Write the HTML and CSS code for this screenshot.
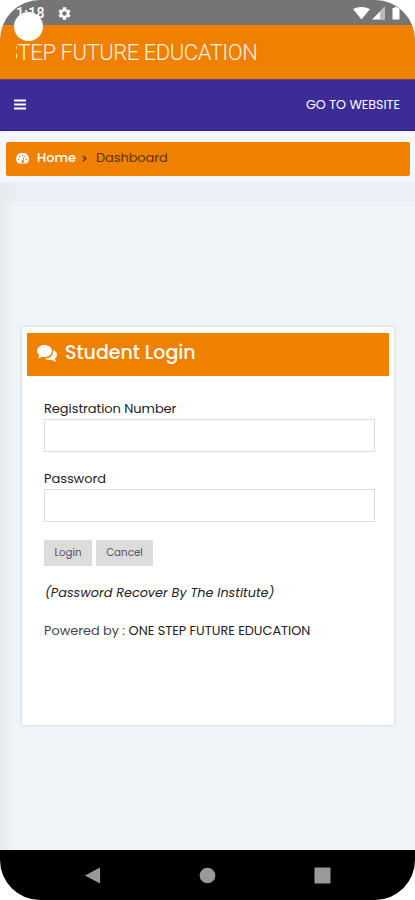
FILE: index.html
```html
<!DOCTYPE html>
<html lang="en">
<head>
<meta charset="utf-8">
<title>Student Login</title>
<link rel="stylesheet" href="styles.css">
</head>
<body>
<div class="phone">
  <div class="camera"></div>
  <div class="status">
    <span class="time">1:18</span>
    <svg class="gear" viewBox="0 0 24 24"><path fill="#fff" fill-rule="evenodd" d="M19.4 13a7.500 7.500 0 0 0 0-2l2.200-1.700-2.200-3.800-2.700 1a8 8 0 0 0-1.700-1L14.600 2H9.400L9 5.500a8 8 0 0 0-1.700 1l-2.700-1-2.200 3.800L4.600 11a7.500 7.500 0 0 0 0 2l-2.200 1.700 2.200 3.800 2.700-1a8 8 0 0 0 1.700 1l.4 3.500h5.200l.4-3.500a8 8 0 0 0 1.700-1l2.700 1 2.200-3.800zM12 8.500a3.500 3.500 0 1 1 0 7 3.500 3.500 0 0 1 0-7z"/></svg>
    <svg class="signals" viewBox="0 0 50 16"><path fill="#fff" d="M1 3Q9.500-1 18 3L9.500 13.500zM20 13.500L32 1.500V13.500z"/><path fill="#bbb" d="M28 5.500L33 .5V13.500H28z"/><path fill="#fff" d="M40.500 2h2V1h3v1h2v11.500h-7z"/></svg>
  </div>
  <header class="brand"><div class="brand-clip"><span class="brand-name">STEP FUTURE EDUCATION</span></div></header>
  <nav class="nav">
    <svg class="menu" viewBox="0 0 12 11"><path stroke="#fff" stroke-width="2" d="M0 1.500h12M0 5.500h12M0 9.500h12"/></svg>
    <a class="site">GO TO WEBSITE</a>
  </nav>
  <main class="page">
    <div class="crumbs">
      <svg class="dash" viewBox="0 0 14 12"><path fill="#fff" d="M1.600 11A7 7 0 1 1 12.400 11Q12 11.500 11.500 11.500h-9Q2 11.500 1.600 11z"/><g fill="#f08000"><circle cx="2.700" cy="7" r=".8"/><circle cx="4" cy="3.800" r=".8"/><circle cx="7" cy="2.500" r=".8"/><circle cx="10" cy="3.800" r=".7"/><circle cx="11.300" cy="7" r=".8"/><path d="M8.300 3.800l.8.200-1 4a1.500 1.500 0 1 1-1-.2z"/></g></svg>
      <span class="home">Home</span>
      <svg class="chev" viewBox="0 0 5 7"><path fill="none" stroke="#5a3510" stroke-width="1.300" d="M.8.700L3.900 3.500.8 6.300"/></svg>
      <span class="current">Dashboard</span>
    </div>
    <div class="band"></div>
    <section class="card">
      <div class="card-head">
        <svg class="chat" viewBox="0 0 20 17"><path fill="#fff" d="M7.500 0C11.600 0 15 2.600 15 6s-3.400 6-7.500 6q-1.100 0-2.200-.3Q3.300 13 .9 13.200q1.200-1.300 1.500-2.900Q0 8.500 0 6C0 2.600 3.400 0 7.500 0z"/><path fill="#fff" d="M16.200 5Q20 6.800 20 9.800q0 2.300-2.100 4 .4 1.600 1.500 2.700-2.500-.1-4.300-1.600-4.400.8-7.200-1.500Q15.400 13.200 16.200 7z"/></svg>
        <h1 class="card-title">Student Login</h1>
      </div>
      <form class="form">
        <label class="label reg" for="reg">Registration Number</label>
        <input class="field" id="reg" type="text">
        <label class="label pass" for="pass">Password</label>
        <input class="field" id="pass" type="password">
        <div class="actions"><button class="btn login" type="button">Login</button><button class="btn cancel" type="button">Cancel</button></div>
        <em class="note">(Password Recover By The Institute)</em>
        <p class="powered">Powered by : <span class="owner">ONE STEP FUTURE EDUCATION</span></p>
      </form>
    </section>
  </main>
  <footer class="softkeys">
    <svg viewBox="0 0 18 18"><path fill="#999" d="M1 9L17 .500v17z"/></svg>
    <svg viewBox="0 0 18 18"><circle cx="9" cy="9" r="8.300" fill="#999"/></svg>
    <svg viewBox="0 0 18 18"><rect x=".5" y=".5" width="17" height="17" rx="1" fill="#999"/></svg>
  </footer>
</div>
</body>
</html>
```
FILE: styles.css
```css
* { box-sizing: border-box; }
body { margin: 0; background: #fff; font-family: Poppins, Inter, "Open Sans", sans-serif; }
.phone { position: relative; display: flex; flex-direction: column; width: 415px; height: 900px; overflow: hidden; border-radius: 40px; background: #f0f5f9; }
.camera { position: absolute; left: 14px; top: 12px; width: 29px; height: 29px; border-radius: 50%; background: #fff; }
.status { display: flex; align-items: flex-start; height: 25px; padding: 6px 13px 0 16px; background: #757575; }
.time { width: 41px; font: 500 14px/15px Roboto, sans-serif; color: #fff; letter-spacing: .3px; }
.gear { width: 15px; height: 15px; }
.signals { width: 50px; height: 16px; margin-left: auto; }
.brand { height: 54px; padding: 14px 16px; background: #f08000; }
.brand-clip { overflow: hidden; height: 28px; }
.brand-name { display: block; margin-left: -11px; font: 300 22px/27px Roboto, sans-serif; letter-spacing: -.43px; color: #fff3e3; white-space: nowrap; }
.nav { display: flex; align-items: center; justify-content: space-between; height: 52px; padding: 0 15px 1px 14px; background: #3d2b98; border-top: 1px solid #65407f; border-bottom: 1px solid #2c1a85; }
.menu { width: 12px; height: 11px; }
.site { font-size: 12.700px; color: #fff; }
.page { flex: 1; background: linear-gradient(90deg, #e7ebec, #f0f5f9 18px); }
.crumbs { display: flex; align-items: center; height: 34px; margin: 11px 5px 0 6px; padding: 0 10px 2px; border-radius: 2px; background: #f08000; box-shadow: 0 0 0 11px #f3f6fa; clip-path: inset(-11px -6px -6px); font-size: 13px; }
.dash { width: 13px; height: 11px; margin: 1px 1px 0 0; }
.home { width: 38px; margin-left: 7px; color: #fff; font-weight: 500; font-size: 13px; }
.chev { width: 5px; height: 7px; margin-left: 7px; }
.current { margin-left: 9px; color: #5a3510; letter-spacing: -.1px; }
.band { height: 20px; margin-top: 6px; background: rgba(228, 230, 242, .35); }
.card { width: 374px; height: 400px; margin: 124px 0 0 21px; padding: 6px 5px 5px; border: 1px solid #e2e6e8; background: #fff; box-shadow: 0 0 2px #d8dddf; }
.card-head { display: flex; align-items: center; height: 43px; padding: 0 10px 3px; background: #f08000; }
.chat { width: 20px; height: 17px; margin-top: 1px; }
.card-title { margin: 0 0 0 8px; font-size: 19px; font-weight: 500; line-height: 28px; color: #fff; }
.form { display: flex; flex-direction: column; padding: 0 14px 0 17px; font-size: 13px; color: #222; }
.label { line-height: 18px; align-self: flex-start; letter-spacing: -.07px; }
.reg { margin-top: 24px; }
.pass { margin-top: 18px; }
.field { width: 331px; height: 33px; margin-top: 1px; border: 1px solid #d9dddf; background: #fff; }
.actions { display: flex; gap: 4px; margin-top: 18px; }
.btn { height: 26px; padding: 0 0 1px; border: 0; background: #dcdcdc; font: 400 10.300px/25px Poppins, Inter, sans-serif; color: #555; }
.login { width: 48px; }
.cancel { width: 57px; }
.note { align-self: flex-start; margin: 18px 0 0 1px; font-size: 12.800px; line-height: 18px; }
.powered { align-self: flex-start; margin: 20px 0 0; line-height: 18px; font-size: 12.850px; color: #444; white-space: nowrap; }
.owner { color: #222; }
.softkeys { display: flex; align-items: center; justify-content: space-between; height: 50px; padding: 1px 84px 0; background: #000; }
.softkeys svg { width: 17px; height: 17px; }
```
